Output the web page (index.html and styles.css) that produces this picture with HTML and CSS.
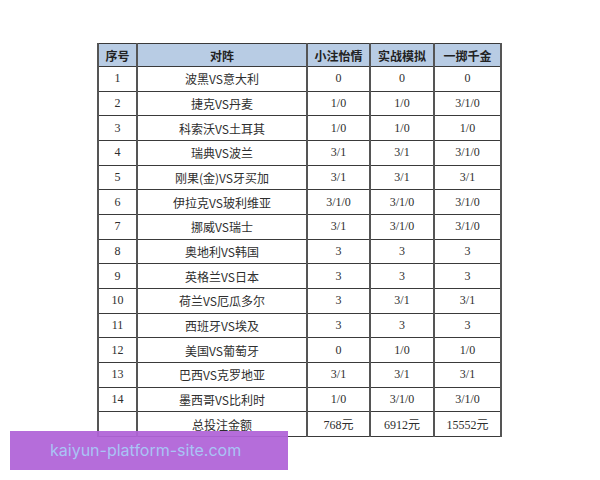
FILE: index.html
```html
<!DOCTYPE html>
<html lang="zh">
<head>
<meta charset="utf-8">
<link rel="stylesheet" href="styles.css">
</head>
<body>
<div class="page">
  <table class="bets">
    <colgroup>
      <col class="c-no"><col class="c-match"><col class="c-a"><col class="c-b"><col class="c-c">
    </colgroup>
    <thead>
      <tr><th>序号</th><th>对阵</th><th>小注怡情</th><th>实战模拟</th><th>一掷千金</th></tr>
    </thead>
    <tbody>
      <tr><td>1</td><td>波黑VS意大利</td><td>0</td><td>0</td><td>0</td></tr>
      <tr><td>2</td><td>捷克VS丹麦</td><td>1/0</td><td>1/0</td><td>3/1/0</td></tr>
      <tr><td>3</td><td>科索沃VS土耳其</td><td>1/0</td><td>1/0</td><td>1/0</td></tr>
      <tr><td>4</td><td>瑞典VS波兰</td><td>3/1</td><td>3/1</td><td>3/1/0</td></tr>
      <tr><td>5</td><td>刚果(金)VS牙买加</td><td>3/1</td><td>3/1</td><td>3/1</td></tr>
      <tr><td>6</td><td>伊拉克VS玻利维亚</td><td>3/1/0</td><td>3/1/0</td><td>3/1/0</td></tr>
      <tr><td>7</td><td>挪威VS瑞士</td><td>3/1</td><td>3/1/0</td><td>3/1/0</td></tr>
      <tr><td>8</td><td>奥地利VS韩国</td><td>3</td><td>3</td><td>3</td></tr>
      <tr><td>9</td><td>英格兰VS日本</td><td>3</td><td>3</td><td>3</td></tr>
      <tr><td>10</td><td>荷兰VS厄瓜多尔</td><td>3</td><td>3/1</td><td>3/1</td></tr>
      <tr><td>11</td><td>西班牙VS埃及</td><td>3</td><td>3</td><td>3</td></tr>
      <tr><td>12</td><td>美国VS葡萄牙</td><td>0</td><td>1/0</td><td>1/0</td></tr>
      <tr><td>13</td><td>巴西VS克罗地亚</td><td>3/1</td><td>3/1</td><td>3/1</td></tr>
      <tr><td>14</td><td>墨西哥VS比利时</td><td>1/0</td><td>3/1/0</td><td>3/1/0</td></tr>
      <tr><td></td><td>总投注金额</td><td>768元</td><td>6912元</td><td>15552元</td></tr>
    </tbody>
  </table>
  <div class="watermark">kaiyun-platform-site.com</div>
</div>
</body>
</html>
```
FILE: styles.css
```css
html, body {
  margin: 0;
  padding: 0;
  background: #ffffff;
}
.page {
  position: relative;
  width: 600px;
  height: 480px;
  padding: 43px 0 0 97px;
  box-sizing: border-box;
}
.bets {
  border-collapse: collapse;
  table-layout: fixed;
  width: 403px;
  font-family: "Liberation Serif", "Noto Sans CJK SC", serif;
  font-size: 12px;
  color: #2e2e2e;
}
.c-no { width: 39px; }
.c-match { width: 170px; }
.c-a { width: 63px; }
.c-b { width: 64px; }
.c-c { width: 67px; }
.bets th, .bets td {
  border-top: 1px solid #3a3a3a;
  border-bottom: 1px solid #3a3a3a;
  border-left: 2px solid #555555;
  border-right: 2px solid #555555;
  text-align: center;
  padding: 0;
  white-space: nowrap;
}
.bets th {
  height: 22px;
  background: #b8cce4;
  font-family: "Noto Sans CJK SC", sans-serif;
  font-weight: 700;
  font-size: 12px;
  color: #222222;
}
.bets td {
  height: 23.67px;
}
.bets td:nth-child(2) {
  font-family: "Noto Sans CJK SC", sans-serif;
  font-size: 12px;
}
.watermark {
  position: absolute;
  left: 10px;
  top: 431px;
  width: 278px;
  height: 39px;
  background: rgba(176, 100, 216, 0.94);
  color: #a9c4f5;
  font-family: Inter, "Noto Sans", sans-serif;
  font-size: 16px;
  line-height: 39px;
  padding-left: 40px;
  box-sizing: border-box;
}
```
